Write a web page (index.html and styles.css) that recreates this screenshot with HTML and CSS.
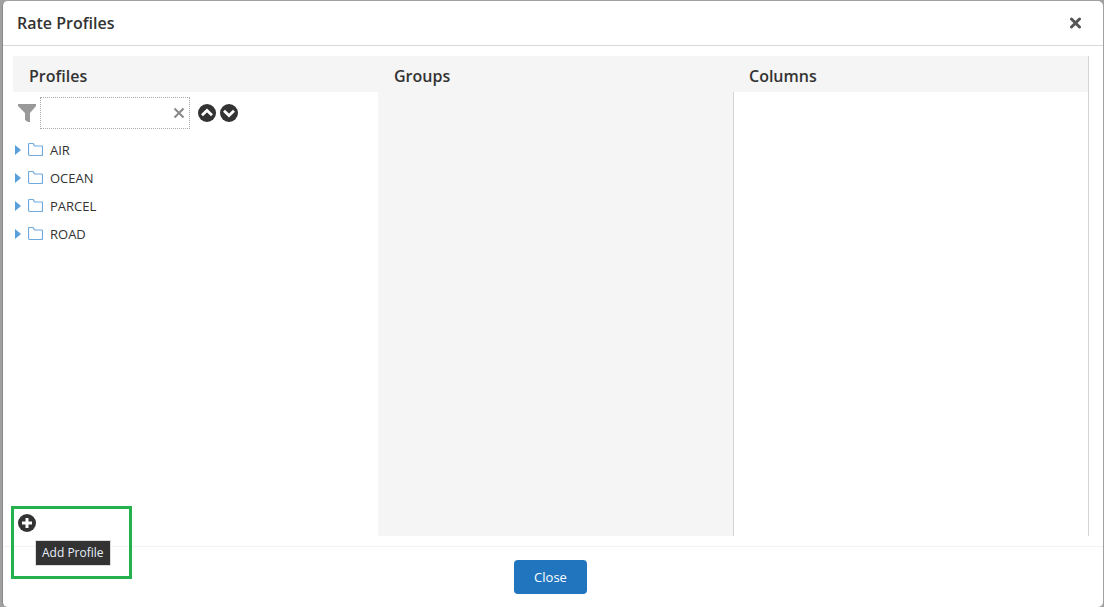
FILE: index.html
```html
<!DOCTYPE html>
<html lang="en">
<head>
<meta charset="utf-8">
<title>Rate Profiles</title>
<link rel="stylesheet" href="styles.css">
</head>
<body>
<svg class="sprite" aria-hidden="true">
  <symbol id="folder" viewBox="1 .5 15 14">
    <path d="M1.500 2.500v9q0 1.500 1.500 1.500h11.500q1 0 1-1v-7.500q0-1-1-1h-7l-1-2q-.3-.5-1-.5h-3q-1 0-1 1.500z" fill="none" stroke="#6eaae0" stroke-width="1.200"/>
  </symbol>
  <symbol id="arrow" viewBox="0 0 6 10">
    <path d="M0 0l6 5-6 5z" fill="#5a9fdc"/>
  </symbol>
</svg>
<div class="dialog" role="dialog" aria-labelledby="dialog-title">
  <header class="dialog-header">
    <h1 class="dialog-title" id="dialog-title">Rate Profiles</h1>
    <button class="icon-button" type="button" aria-label="Close dialog">
      <svg width="13" height="12" viewBox="0 0 13 12"><path d="M2.500 2l8 8m0-8l-8 8" stroke="#555" stroke-width="3" stroke-linecap="round"/></svg>
    </button>
  </header>
  <main class="columns">
    <section class="column">
      <h2 class="column-title">Profiles</h2>
      <div class="filter">
        <svg class="funnel" width="18" height="19" viewBox="0 0 18 19"><path d="M0 0h18v2l-6 7v9h-2l-3-2V9L0 2z" fill="#999"/></svg>
        <div class="search">
          <input class="search-input" type="text" aria-label="Filter profiles">
          <button class="icon-button" type="button" aria-label="Clear filter">
            <svg width="12" height="12" viewBox="0 0 12 12"><path d="M1.500 1.500l9 9m0-9l-9 9" stroke="#888" stroke-width="2"/></svg>
          </button>
        </div>
        <button class="icon-button" type="button" aria-label="Previous match">
          <svg width="18" height="18" viewBox="0 0 18 18"><circle cx="9" cy="9" r="9" fill="#333"/><path d="M4 11.200L9 6.500l5 4.700" fill="none" stroke="#fff" stroke-width="2.800"/></svg>
        </button>
        <button class="icon-button" type="button" aria-label="Next match">
          <svg width="18" height="18" viewBox="0 0 18 18"><circle cx="9" cy="9" r="9" fill="#333"/><path d="M4 6.800L9 11.500l5-4.700" fill="none" stroke="#fff" stroke-width="2.800"/></svg>
        </button>
      </div>
      <ul class="tree">
        <li><button class="tree-item" type="button"><svg width="6" height="10"><use href="#arrow"/></svg><svg width="15" height="14"><use href="#folder"/></svg><span class="tree-label">AIR</span></button></li>
        <li><button class="tree-item" type="button"><svg width="6" height="10"><use href="#arrow"/></svg><svg width="15" height="14"><use href="#folder"/></svg><span class="tree-label">OCEAN</span></button></li>
        <li><button class="tree-item" type="button"><svg width="6" height="10"><use href="#arrow"/></svg><svg width="15" height="14"><use href="#folder"/></svg><span class="tree-label">PARCEL</span></button></li>
        <li><button class="tree-item" type="button"><svg width="6" height="10"><use href="#arrow"/></svg><svg width="15" height="14"><use href="#folder"/></svg><span class="tree-label">ROAD</span></button></li>
      </ul>
      <div class="actions">
        <button class="icon-button" type="button" aria-describedby="add-tip" aria-label="Add Profile">
          <svg width="18" height="18" viewBox="0 0 18 18"><circle cx="9" cy="9" r="9" fill="#333"/><path d="M9 4v10M4 9h10" stroke="#fff" stroke-width="3"/></svg>
        </button>
        <div class="highlight"></div>
        <div class="tooltip" role="tooltip" id="add-tip">Add Profile</div>
      </div>
    </section>
    <section class="column column-muted">
      <h2 class="column-title">Groups</h2>
    </section>
    <section class="column column-last">
      <h2 class="column-title">Columns</h2>
      <div class="column-body"></div>
    </section>
  </main>
  <footer class="dialog-footer">
    <button class="primary" type="button">Close</button>
  </footer>
</div>
</body>
</html>
```
FILE: styles.css
```css
* {
  box-sizing: border-box;
}

body {
  margin: 0;
  padding: 1px 1px 0 2px;
  background: #a0a0a0;
  color: #333;
  font: 13px/20px "Open Sans", "Noto Sans", sans-serif;
}

svg {
  display: block;
  flex: none;
}

.sprite {
  position: absolute;
  width: 0;
  height: 0;
}

.dialog {
  display: flex;
  flex-direction: column;
  min-height: calc(100vh - 1px);
  border-left: 1px solid #888;
  border-radius: 5px;
  background: #fff;
}

.dialog-header {
  display: flex;
  align-items: center;
  justify-content: space-between;
  height: 45px;
  padding: 0 21px 0 14px;
  border-bottom: 1px solid #d8d8d8;
}

.dialog-title,
.column-title {
  margin: 0;
  font-size: 16px;
  font-weight: 600;
}

.icon-button {
  padding: 0;
  border: 0;
  background: none;
}

.columns {
  display: grid;
  flex: 1;
  grid-template-columns: 365fr 355fr 356fr;
  padding: 10px 14px 10px 10px;
}

.column {
  display: flex;
  flex-direction: column;
}

.column-title {
  height: 36px;
  padding: 0 16px;
  background: #f5f5f5;
  line-height: 40px;
}

.column-muted {
  background: #f5f5f5;
}

.column-last {
  border-right: 1px solid #d4d4d4;
}

.column-body {
  flex: 1;
  border-left: 1px solid #d4d4d4;
}

.filter {
  display: flex;
  align-items: center;
  gap: 4px;
  padding: 5px;
}

.search {
  display: flex;
  align-items: center;
  width: 150px;
  height: 32px;
  margin-right: 4px;
  padding-right: 4px;
  border: 1px dotted #aaa;
}

.search-input {
  flex: 1;
  min-width: 0;
  height: 100%;
  padding: 0 8px;
  border: 0;
  outline: 0;
  background: none;
  font: inherit;
}

.tree {
  flex: 1;
  margin: 0;
  padding: 2px;
  list-style: none;
}

.tree-item {
  display: flex;
  align-items: center;
  height: 28px;
  padding: 0;
  border: 0;
  background: none;
  color: inherit;
  font: inherit;
  gap: 7px;
}

.actions {
  position: relative;
  padding: 5px 5px 4px;
}

.highlight {
  position: absolute;
  top: -3px;
  left: -2px;
  width: 121px;
  height: 73px;
  border: 3px solid #22b14c;
  pointer-events: none;
}

.tooltip {
  position: absolute;
  top: 31px;
  left: 22px;
  padding: 2px 6px;
  border: 1px solid #ddd;
  background: #333;
  color: #e8eef8;
  font-size: 12px;
  white-space: nowrap;
}

.actions .icon-button {
  display: block;
}

.dialog-footer {
  display: flex;
  justify-content: center;
  padding: 13px 0;
  border-top: 1px solid #f2f2f2;
}

.primary {
  height: 34px;
  padding: 0 20px;
  border: 0;
  margin-right: 5px;
  border-radius: 4px;
  background: #2175bf;
  color: #fff;
  font: inherit;
}
```
